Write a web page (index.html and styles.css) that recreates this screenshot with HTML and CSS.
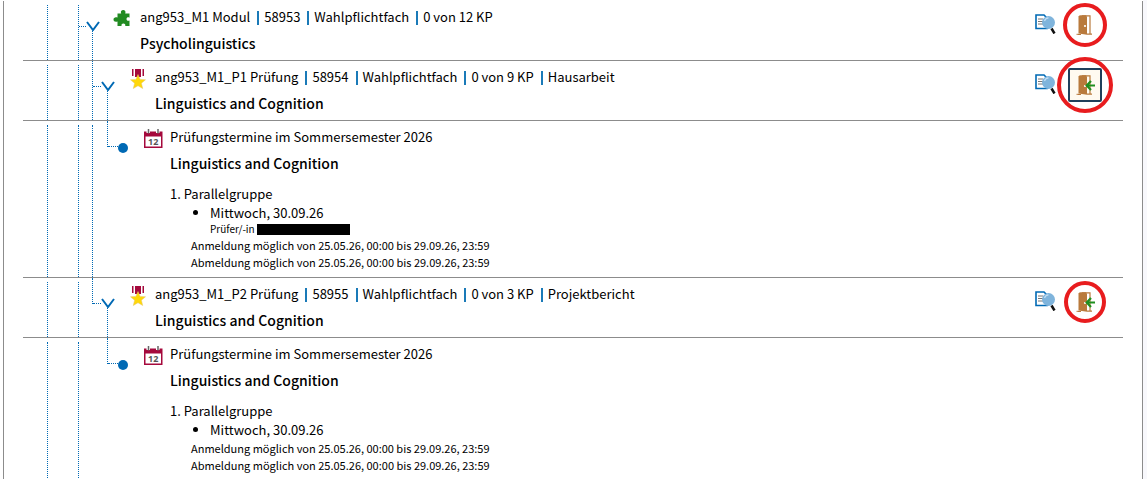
FILE: index.html
```
<!DOCTYPE html>
<html lang="de">
<head>
  <meta charset="UTF-8">
  <title>Studienplaner</title>
  <meta name="viewport" content="width=device-width, initial-scale=1.0">
  <link rel="stylesheet" href="styles.css">
</head>
<body>

  <!-- Icons -->
  <svg class="sprite" aria-hidden="true">
    <symbol id="chevron" viewBox="0 0 14 10">
      <path d="M1 1 L7 9 L13 1" fill="none" stroke="#0069b4" stroke-width="2"/>
    </symbol>
    <symbol id="puzzle" viewBox="0 0 20 20">
      <path d="M4.500 4.500h3.700C7.200 2.400 8.500 1 10.200 1s3 1.400 2 3.500H16.500v4.200c-1.500-.8-3-.2-3 1.400s1.500 2.200 3 1.400V17H12.200c.6-1.700-.4-2.600-1.800-2.600S8 15.300 8.600 17H4.500v-4.600C2.400 13.400.5 12.300.5 10.500S2.400 7.600 4.500 8.600z" fill="#228b22"/>
    </symbol>
    <symbol id="medal" viewBox="0 0 20 20">
      <path d="M4 0h1.500v7H4zM7 0h6v8H7zM14.500 0H16v7h-1.500z" fill="#a5093c"/>
      <path d="M10 5.500l2.100 4.900 5.400.4-4.100 3.400 1.300 5.300L10 16.700l-4.700 2.800 1.300-5.300-4.100-3.400 5.400-.4z" fill="#ffd80a" stroke="#e5c66a" stroke-width=".5"/>
    </symbol>
    <symbol id="calendar" viewBox="0 0 20 20">
      <path d="M1 2.500h18.500v16.500H1z" fill="#a5093c"/>
      <path d="M2.500 7.500H18v10H2.500z" fill="#fff"/>
      <path d="M3.500 0h3.500v4H3.500zM13 0h3.500v4H13z" fill="#fff"/>
      <path d="M5.500 0v4.500M15 0v4.500" stroke="#666" stroke-width="1.500"/>
      <text x="10.200" y="16" text-anchor="middle" class="calendar-day">12</text>
    </symbol>
    <symbol id="details" viewBox="0 0 22 20">
      <path d="M1 1h8l3 3v10.500H1z" fill="#fff" stroke="#0069b4" stroke-width="1.600"/>
      <path d="M3 5h5M3 7.500h5M3 10h5" stroke="#777"/>
      <path d="M16.500 14.500l3 5" stroke="#111" stroke-width="2.500"/>
      <circle cx="13.500" cy="8.500" r="6.500" fill="#7fb4dc"/>
      <path d="M9.500 7q1-3 4-3.200" fill="none" stroke="#c3def2" stroke-width="1.200"/>
    </symbol>
    <symbol id="door" viewBox="0 0 20 20">
      <path d="M3 19.500h3M12 19.200h5M7 .8h8v18" fill="none" stroke="#b97a3c" stroke-width="1.200"/>
      <path d="M3.500 1.500Q4 .2 6 .2h5L12 2v17.800l-8.500-1.200z" fill="#b97a3c"/>
      <path d="M1.500 19.300H4" stroke="#b97a3c"/>
      <circle cx="10" cy="11" r="1.100" fill="#fff"/>
    </symbol>
    <symbol id="arrow" viewBox="0 0 20 20">
      <path d="M20 10.500h-7M16 6l-4.300 4.500L16 15" fill="none" stroke="#1f8f1f" stroke-width="2.200"/>
    </symbol>
  </svg>

  <main class="plan">

    <section class="row">
      <span class="rail rail-root"></span>
      <span class="rail rail-area"></span>
      <span class="elbow"></span>
      <div class="node">
        <button type="button" class="toggle" aria-label="Zuklappen"><svg><use href="#chevron"/></svg></button>
        <span class="stem"></span>
      </div>
      <svg class="type-icon"><use href="#puzzle"/></svg>
      <div class="info">
        <div class="meta"><span>ang953_M1 Modul</span><span>58953</span><span>Wahlpflichtfach</span><span>0 von 12 KP</span></div>
        <h2>Psycholinguistics</h2>
      </div>
      <div class="actions">
        <button type="button" class="details" aria-label="Details"><svg><use href="#details"/></svg></button>
        <button type="button" class="door marked" aria-label="Anmeldung"><svg><use href="#door"/></svg></button>
      </div>
    </section>

    <section class="row">
      <span class="rail rail-root"></span>
      <span class="rail rail-area"></span>
      <span class="rail rail-module joined"></span>
      <span class="elbow"></span>
      <div class="node">
        <button type="button" class="toggle" aria-label="Zuklappen"><svg><use href="#chevron"/></svg></button>
        <span class="stem"></span>
      </div>
      <svg class="type-icon"><use href="#medal"/></svg>
      <div class="info">
        <div class="meta"><span>ang953_M1_P1 Prüfung</span><span>58954</span><span>Wahlpflichtfach</span><span>0 von 9 KP</span><span>Hausarbeit</span></div>
        <h2>Linguistics and Cognition</h2>
      </div>
      <div class="actions">
        <button type="button" class="details" aria-label="Details"><svg><use href="#details"/></svg></button>
        <button type="button" class="door focused marked marked-large" aria-label="Anmelden"><svg><use href="#door"/><use href="#arrow"/></svg></button>
      </div>
    </section>

    <section class="row">
      <span class="rail rail-root"></span>
      <span class="rail rail-area"></span>
      <span class="rail rail-module"></span>
      <span class="rail rail-exam joined last"></span>
      <span class="elbow elbow-leaf"></span>
      <span class="dot"></span>
      <svg class="type-icon"><use href="#calendar"/></svg>
      <div class="info">
        <div class="meta"><span>Prüfungstermine im Sommersemester 2026</span></div>
        <h2>Linguistics and Cognition</h2>
        <p class="group">1. Parallelgruppe</p>
        <ul class="dates">
          <li>Mittwoch, 30.09.26
            <div class="examiner">Prüfer/-in <span class="redacted"></span></div>
          </li>
        </ul>
        <p class="period">Anmeldung möglich von 25.05.26, 00:00 bis 29.09.26, 23:59</p>
        <p class="period">Abmeldung möglich von 25.05.26, 00:00 bis 29.09.26, 23:59</p>
      </div>
    </section>

    <section class="row">
      <span class="rail rail-root"></span>
      <span class="rail rail-area"></span>
      <span class="rail rail-module joined last"></span>
      <span class="elbow"></span>
      <div class="node">
        <button type="button" class="toggle" aria-label="Zuklappen"><svg><use href="#chevron"/></svg></button>
        <span class="stem"></span>
      </div>
      <svg class="type-icon"><use href="#medal"/></svg>
      <div class="info">
        <div class="meta"><span>ang953_M1_P2 Prüfung</span><span>58955</span><span>Wahlpflichtfach</span><span>0 von 3 KP</span><span>Projektbericht</span></div>
        <h2>Linguistics and Cognition</h2>
      </div>
      <div class="actions">
        <button type="button" class="details" aria-label="Details"><svg><use href="#details"/></svg></button>
        <button type="button" class="door marked marked-small" aria-label="Anmelden"><svg><use href="#door"/><use href="#arrow"/></svg></button>
      </div>
    </section>

    <section class="row">
      <span class="rail rail-root"></span>
      <span class="rail rail-area"></span>
      <span class="rail rail-module empty"></span>
      <span class="rail rail-exam joined last"></span>
      <span class="elbow elbow-leaf"></span>
      <span class="dot"></span>
      <svg class="type-icon"><use href="#calendar"/></svg>
      <div class="info">
        <div class="meta"><span>Prüfungstermine im Sommersemester 2026</span></div>
        <h2>Linguistics and Cognition</h2>
        <p class="group">1. Parallelgruppe</p>
        <ul class="dates">
          <li>Mittwoch, 30.09.26</li>
        </ul>
        <p class="period">Anmeldung möglich von 25.05.26, 00:00 bis 29.09.26, 23:59</p>
        <p class="period">Abmeldung möglich von 25.05.26, 00:00 bis 29.09.26, 23:59</p>
      </div>
    </section>

  </main>

</body>
</html>
```
FILE: styles.css
```
* {
  box-sizing: border-box;
}

body {
  margin: 0;
  border-right: 4px solid #f8f8fc;
  background: #fff;
  color: #000;
  font-family: "Noto Sans CJK SC", "Noto Sans", sans-serif;
  font-size: 13px;
  line-height: 20px;
}

h2, p, ul {
  margin: 0;
}

button {
  display: block;
  padding: 0;
  border: 0;
  background: none;
  cursor: pointer;
}

svg {
  display: block;
}

.sprite {
  display: none;
}

.plan {
  display: flex;
  flex-direction: column;
  min-height: calc(100vh - 1px);
  margin: 1px 0 0 3px;
  padding: 0 19px;
  border-left: 1px solid #8c8c8c;
  border-right: 1px solid #8c8c8c;
}

.row {
  display: flex;
  border-bottom: 1px solid #8c8c8c;
}

.row:last-child {
  flex: 1;
  border-bottom: 0;
}

/* tree lines */
.rail {
  flex: none;
  margin-top: 4px;
  border-right: 1px dotted #0069b4;
}

.rail-root {
  width: 25px;
}

.rail-area {
  width: 31px;
}

.rail-module {
  width: 14px;
}

.rail-exam {
  width: 15px;
}

.rail.joined {
  margin-top: 0;
}

.rail.last {
  height: 26px;
}

.rail.empty {
  border-color: transparent;
}

.elbow {
  flex: none;
  width: 7px;
  margin-top: 25px;
  border-top: 1px dotted #0069b4;
}

.rail-module + .elbow {
  width: 8px;
}

.elbow-leaf {
  width: 10px;
}

.node {
  display: flex;
  flex-direction: column;
  width: 14px;
  padding-top: 20px;
}

.toggle svg {
  width: 14px;
  height: 10px;
}

.stem {
  flex: 1;
  margin-left: 6px;
  border-left: 1px dotted #0069b4;
}

.dot {
  flex: none;
  width: 10px;
  height: 10px;
  margin: 22px 2px 0 0;
  border-radius: 50%;
  background: #0069b4;
}

.type-icon {
  flex: none;
  width: 20px;
  height: 20px;
  margin: 8px 7px 0 13px;
}

.calendar-day {
  font: bold 9px "Noto Sans", sans-serif;
  fill: #555;
}

/* texts */
.info {
  flex: 1;
  padding: 6px 0 5px;
}

.meta {
  display: flex;
}

.meta span + span::before {
  content: "";
  display: inline-block;
  width: 2px;
  height: 14px;
  margin: 0 5px 0 7px;
  background: #1a7ab8;
  vertical-align: -3px;
}

h2 {
  margin-top: 4px;
  font-size: 14px;
  font-weight: 500;
  line-height: 24px;
}

.group {
  margin-top: 9px;
}

.dates {
  margin-bottom: 1px;
  padding-left: 40px;
  line-height: 18px;
}

.examiner {
  font-size: 10px;
  line-height: 14px;
}

.redacted {
  display: inline-block;
  width: 93px;
  height: 11px;
  background: #000;
  vertical-align: -2px;
}

.period {
  padding-left: 21px;
  font-size: 11px;
  line-height: 17px;
}

.period:last-child {
  margin-bottom: 1px;
}

/* buttons on the right */
.actions {
  display: flex;
  align-items: flex-start;
  gap: 11px;
  padding: 7px 21px 0 0;
}

.details svg {
  width: 22px;
  height: 20px;
  margin-top: 6px;
}

.door {
  position: relative;
  display: flex;
  align-items: center;
  justify-content: center;
  width: 34px;
  height: 34px;
  border: 2px solid transparent;
  border-radius: 2px;
}

.door svg {
  width: 20px;
  height: 20px;
}

.door.focused {
  border-color: #1f3f5b;
  background: #fffaf0;
}

.marked::after {
  content: "";
  position: absolute;
  inset: -7px;
  border: 4px solid #e81c1e;
  border-radius: 50%;
}

.marked-large::after {
  inset: -13px;
}

.marked-small::after {
  inset: -6px;
}
```
